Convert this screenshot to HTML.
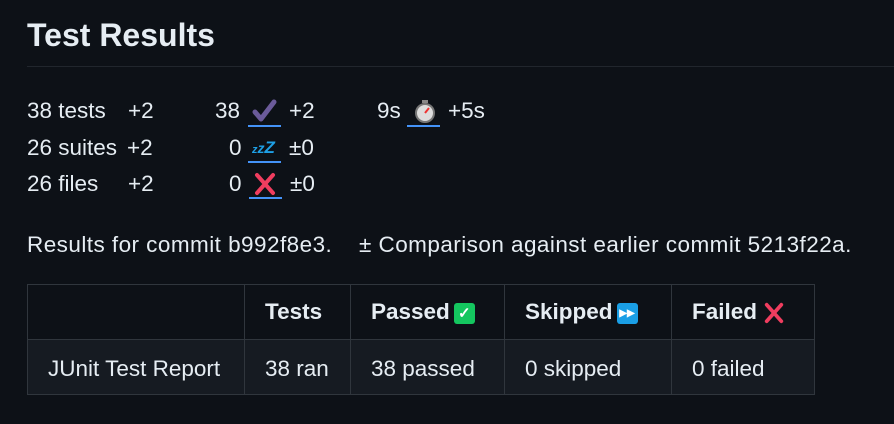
<!DOCTYPE html>
<html><head><meta charset="utf-8"><style>
body{margin:0;background:#0d1117;width:894px;height:424px;overflow:hidden;color:#e6edf3;font-family:"Liberation Sans",sans-serif;position:relative}
.a{position:absolute;white-space:nowrap;font-size:22.5px;line-height:24px}
h1{position:absolute;left:27px;top:15px;margin:0;font-size:32px;font-weight:600;line-height:40px}
.hr{position:absolute;left:27px;right:0;top:66px;height:1px;background:#21262d}
.u{position:absolute;height:2px;background:#4493f8}
table{position:absolute;left:27px;top:284px;border-collapse:collapse;font-size:22.5px;table-layout:fixed;width:787px}
td,th{border:1px solid #30363d;padding:0 0 0 20px;height:54px;text-align:left;white-space:nowrap}
th{font-weight:bold}
tr.b td{background:#161b22;padding-top:3px;height:51px}
.ic{display:inline-block;width:21px;height:21px;border-radius:3px;vertical-align:middle;color:#fff;text-align:center;line-height:21px;margin-left:4px}
</style></head><body>
<h1>Test Results</h1>
<div class="hr"></div>

<div class="a" style="left:27px;top:99px">38 tests</div>
<div class="a" style="left:128px;top:99px">+2</div>
<div class="a" style="left:215px;top:99px">38</div>
<svg class="a" style="left:252px;top:99px" width="26" height="24" viewBox="0 0 26 24"><path d="M3 13 L9 20 L22 3" stroke="#6b5b9a" stroke-width="5" fill="none" stroke-linejoin="round" stroke-linecap="round"/></svg>
<div class="u" style="left:248px;top:125px;width:33px"></div>
<div class="a" style="left:289px;top:99px">+2</div>
<div class="a" style="left:377px;top:99px">9s</div>
<svg class="a" style="left:413px;top:99px" width="24" height="24" viewBox="0 0 24 24"><rect x="9" y="1" width="6" height="3" fill="#888"/><circle cx="12" cy="14" r="9" fill="#ddd" stroke="#777" stroke-width="2"/><path d="M12 14 L16 9" stroke="#e33" stroke-width="2"/></svg>
<div class="u" style="left:407px;top:125px;width:33px"></div>
<div class="a" style="left:448px;top:99px">+5s</div>

<div class="a" style="left:27px;top:136px">26 suites</div>
<div class="a" style="left:127px;top:136px">+2</div>
<div class="a" style="left:229px;top:136px">0</div>
<div class="a" style="left:252px;top:136px;font-size:17px;font-weight:bold;color:#1ea0e6;font-style:italic"><span style="font-size:11px">z</span><span style="font-size:14px">z</span>Z</div>
<div class="u" style="left:248px;top:161px;width:33px"></div>
<div class="a" style="left:289px;top:136px">±0</div>

<div class="a" style="left:27px;top:172px">26 files</div>
<div class="a" style="left:128px;top:172px">+2</div>
<div class="a" style="left:229px;top:172px">0</div>
<svg class="a" style="left:253px;top:172px" width="24" height="24" viewBox="0 0 24 24"><path d="M4 3 L20 21 M20 3 L4 21" stroke="#f03d5f" stroke-width="4" stroke-linecap="round"/></svg>
<div class="u" style="left:249px;top:197px;width:33px"></div>
<div class="a" style="left:290px;top:172px">±0</div>

<div class="a" style="left:27px;top:233px;letter-spacing:0.45px">Results for commit b992f8e3.</div>
<div class="a" style="left:359px;top:233px;letter-spacing:0.45px">± Comparison against earlier commit 5213f22a.</div>

<table>
<colgroup><col style="width:217px"><col style="width:106px"><col style="width:154px"><col style="width:167px"><col style="width:143px"></colgroup>
<tr><th></th><th>Tests</th><th>Passed<span class="ic" style="background:#14c65f;font-size:15px">✓</span></th><th>Skipped<span class="ic" style="background:#1a9fe6;font-size:10px">▶▶</span></th><th>Failed<svg style="vertical-align:middle;margin-left:6px" width="22" height="22" viewBox="0 0 24 24"><path d="M4 3 L20 21 M20 3 L4 21" stroke="#f03d5f" stroke-width="4" stroke-linecap="round"/></svg></th></tr>
<tr class="b"><td>JUnit Test Report</td><td>38 ran</td><td>38 passed</td><td>0 skipped</td><td>0 failed</td></tr>
</table>
</body></html>
